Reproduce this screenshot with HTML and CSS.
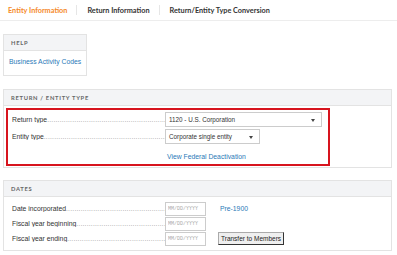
FILE: index.html
```html
<!DOCTYPE html>
<html lang="en">
<head>
    <meta charset="UTF-8">
    <title>Entity Information</title>
    <link rel="stylesheet" href="styles.css">
</head>
<body>
    <div class="tabs">
        <a class="tab active">Entity Information</a>
        <span class="sep"></span>
        <a class="tab">Return Information</a>
        <span class="sep"></span>
        <a class="tab">Return/Entity Type Conversion</a>
    </div>

    <div class="panel help">
        <div class="panel-head">HELP</div>
        <div class="panel-body">
            <a class="link">Business Activity Codes</a>
        </div>
    </div>

    <div class="panel">
        <div class="panel-head">RETURN / ENTITY TYPE</div>
        <div class="panel-body return">
            <div class="highlight">
                <div class="row">
                    <span class="label">Return type</span>
                    <div class="select wide">1120 - U.S. Corporation<span class="caret"></span></div>
                </div>
                <div class="row">
                    <span class="label">Entity type</span>
                    <div class="select narrow">Corporate single entity<span class="caret"></span></div>
                </div>
                <div class="row link-row">
                    <span class="label-blank"></span>
                    <a class="link">View Federal Deactivation</a>
                </div>
            </div>
        </div>
    </div>

    <div class="panel dates-panel">
        <div class="panel-head">DATES</div>
        <div class="panel-body dates">
            <div class="row">
                <span class="label">Date incorporated</span>
                <input class="date" placeholder="MM/DD/YYYY">
                <a class="link pre">Pre-1900</a>
            </div>
            <div class="row">
                <span class="label">Fiscal year beginning</span>
                <input class="date" placeholder="MM/DD/YYYY">
            </div>
            <div class="row">
                <span class="label">Fiscal year ending</span>
                <input class="date" placeholder="MM/DD/YYYY">
                <button class="btn">Transfer to Members</button>
            </div>
        </div>
    </div>
</body>
</html>
```

FILE: styles.css
```css
body {
    margin: 0;
    font-family: "Liberation Sans", Arial, sans-serif;
    font-size: 6.8px;
    color: #333;
    background: #fff;
}
.tabs {
    display: flex;
    align-items: center;
    height: 20px;
    padding-left: 8px;
    border-bottom: 1px solid #ededed;
}
.tab {
    font-family: Lato, sans-serif;
    font-weight: bold;
    font-size: 7.3px;
    color: #333;
}
.tab.active {
    color: #f58a2a;
}
.sep {
    width: 1px;
    height: 10px;
    background: #e6e6e6;
    margin: 0 10px 0 9px;
}
.panel {
    margin: 13px 5px 0 3px;
    border: 1px solid #e3e3e3;
}
.panel.help {
    width: 82px;
}
.panel.dates-panel {
    margin-top: 12px;
}
.panel-head {
    background: #f3f4f6;
    border-bottom: 1px solid #e3e3e3;
    height: 15px;
    line-height: 15px;
    padding-left: 7px;
    font-family: Lato, sans-serif;
    font-weight: bold;
    font-size: 5.8px;
    letter-spacing: 0.7px;
    color: #666;
}
.help .panel-body {
    padding: 7px 4px 10px 5px;
    white-space: nowrap;
}
.link {
    color: #2a7ab8;
}
.return {
    padding-bottom: 1px;
}
.highlight {
    margin: 2px 0 0 2px;
    width: 320px;
    border: 2px solid #d7141e;
    padding-top: 1px;
}
.row {
    display: flex;
    align-items: center;
    height: 15px;
}
.highlight .row {
    height: 17px;
}
.label {
    width: 153px;
    margin-left: 4px;
    display: flex;
    overflow: hidden;
    white-space: nowrap;
}
.dates .label {
    margin-left: 8px;
}
.label::after {
    content: "..................................................................................................................";
    color: #999;
    letter-spacing: 0.2px;
    overflow: hidden;
}
.label-blank {
    width: 155px;
    margin-left: 4px;
}
.select {
    position: relative;
    height: 15px;
    line-height: 13px;
    border: 1px solid #ccc;
    padding-left: 3px;
    box-sizing: border-box;
    font-size: 6.3px;
    color: #333;
}
.select.wide {
    width: 157px;
}
.select.narrow {
    width: 95px;
}
.caret {
    position: absolute;
    right: 6px;
    top: 6px;
    border-left: 2.5px solid transparent;
    border-right: 2.5px solid transparent;
    border-top: 3px solid #444;
}
.highlight .link-row {
    margin-top: 4px;
    height: 15px;
}
.dates {
    padding: 4px 0 4px;
}
.date {
    width: 41px;
    height: 14px;
    margin: 0;
    box-sizing: border-box;
    border: 1px solid #ccc;
    padding: 0 2px;
    font-family: "Liberation Mono", monospace;
    font-size: 5px;
}
.date::placeholder {
    color: #aaa;
}
.dates .pre {
    margin-left: 14px;
    color: #2a7ab8;
}
.btn {
    margin: 0 0 0 12px;
    height: 13px;
    padding: 0 2px;
    font-family: "Liberation Sans", Arial, sans-serif;
    font-size: 6.5px;
    color: #222;
    background: #efefef;
    border: 1px solid #aaa;
    border-right-color: #333;
    border-bottom-color: #333;
}
```
